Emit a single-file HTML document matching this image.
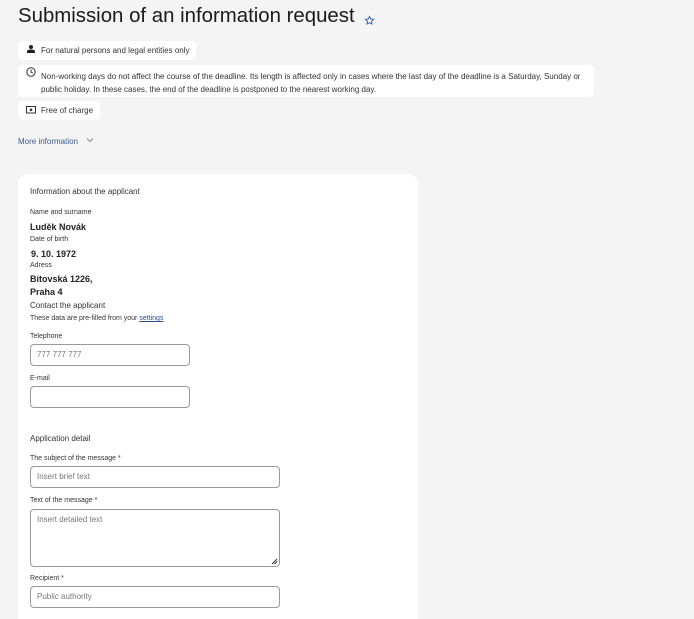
<!DOCTYPE html>
<html style="overflow:hidden;height:619px"><head><style>
body{margin:0;width:694px;height:619px;background:#f4f4f4;font-family:"Liberation Sans",sans-serif;position:relative;overflow:hidden;color:#222}
.a{position:absolute;white-space:nowrap}
.chip{position:absolute;background:#fff;border-radius:5px}
.s{font-size:8px;color:#333}
.inp{position:absolute;left:30px;border:1px solid #999;border-radius:4px;background:#fff;box-sizing:border-box;font-size:8px;color:#777;padding-left:6px}
</style></head><body>
<div class="a" style="left:18px;top:5px;font-size:20.4px;color:#1a1a1a">Submission of an information request</div>
<svg class="a" style="left:364px;top:15px" width="11" height="11" viewBox="0 0 24 24"><path d="M12 3l2.7 5.6 6.1.8-4.4 4.3 1 6.1L12 16.9 6.6 19.8l1-6.1L3.2 9.4l6.1-.8z" fill="none" stroke="#2a5db0" stroke-width="2"/></svg>
<div class="chip" style="left:18px;top:41px;width:178px;height:19px"></div>
<svg class="a" style="left:27px;top:45px" width="8" height="8" viewBox="0 0 8 8"><circle cx="4" cy="2" r="2" fill="#222"/><path d="M0 8v-1.5c0-1.5 2-2 4-2s4 .5 4 2V8z" fill="#222"/></svg>
<div class="a s" style="left:41px;top:46px">For natural persons and legal entities only</div>
<div class="chip" style="left:18px;top:65px;width:576px;height:32px"></div>
<svg class="a" style="left:26px;top:67px" width="10" height="10" viewBox="0 0 10 10"><circle cx="5" cy="5" r="4.2" fill="none" stroke="#333" stroke-width="1"/><path d="M5 2.5V5l1.8 1.2" fill="none" stroke="#333" stroke-width="1"/></svg>
<div class="a s" style="left:41px;top:70px;line-height:13px">Non-working days do not affect the course of the deadline. Its length is affected only in cases where the last day of the deadline is a Saturday, Sunday or<br>public holiday. In these cases, the end of the deadline is postponed to the nearest working day.</div>
<div class="chip" style="left:18px;top:101px;width:82px;height:19px"></div>
<svg class="a" style="left:26px;top:106px" width="10" height="8" viewBox="0 0 10 8"><rect x=".5" y=".5" width="9" height="6.5" fill="none" stroke="#333"/><circle cx="5" cy="3.8" r="1.3" fill="#333"/></svg>
<div class="a s" style="left:41px;top:106px">Free of charge</div>
<div class="a" style="left:18px;top:137px;font-size:8px;color:#3a5a8c">More information</div>
<svg class="a" style="left:86px;top:137px" width="8" height="6" viewBox="0 0 8 6"><path d="M1 1.5l3 3 3-3" fill="none" stroke="#888"/></svg>
<div class="chip" style="left:18px;top:174px;width:400px;height:460px;border-radius:10px"></div>
<div class="a s" style="left:30px;top:187px">Information about the applicant</div>
<div class="a" style="left:30px;top:209px;font-size:7px;color:#333">Name and surname</div>
<div class="a" style="left:30px;top:222px;font-size:9px;color:#222;font-weight:bold">Luděk Novák</div>
<div class="a" style="left:30px;top:236px;font-size:7px;color:#333">Date of birth</div>
<div class="a" style="left:31px;top:249px;font-size:9px;color:#222;font-weight:bold">9. 10. 1972</div>
<div class="a" style="left:30px;top:262px;font-size:7px;color:#333">Adress</div>
<div class="a" style="left:30px;top:273px;font-size:9px;color:#222;line-height:13px;font-weight:bold">Bítovská 1226,<br>Praha 4</div>
<div class="a s" style="left:30px;top:301px">Contact the applicant</div>
<div class="a" style="left:30px;top:315px;font-size:7px;color:#333">These data are pre-filled from your <span style="color:#2a4f9a;text-decoration:underline">settings</span></div>
<div class="a" style="left:30px;top:333px;font-size:7px;color:#333">Telephone</div>
<div class="inp" style="top:344px;width:160px;height:22px;line-height:20px">777 777 777</div>
<div class="a" style="left:30px;top:375px;font-size:7px;color:#333">E-mail</div>
<div class="inp" style="top:386px;width:160px;height:22px"></div>
<div class="a s" style="left:30px;top:434px">Application detail</div>
<div class="a" style="left:30px;top:455px;font-size:7px;color:#333">The subject of the message *</div>
<div class="inp" style="top:466px;width:250px;height:22px;line-height:20px">Insert brief text</div>
<div class="a" style="left:30px;top:497px;font-size:7px;color:#333">Text of the message *</div>
<div class="inp" style="top:509px;width:250px;height:58px;line-height:20px">Insert detailed text</div>
<svg class="a" style="left:271px;top:558px" width="7" height="7" viewBox="0 0 7 7"><path d="M1 6L6 1M3.5 6L6 3.5" stroke="#333"/></svg>
<div class="a" style="left:30px;top:575px;font-size:7px;color:#333">Recipient *</div>
<div class="inp" style="top:586px;width:250px;height:22px;line-height:20px">Public authority</div>
</body></html>
